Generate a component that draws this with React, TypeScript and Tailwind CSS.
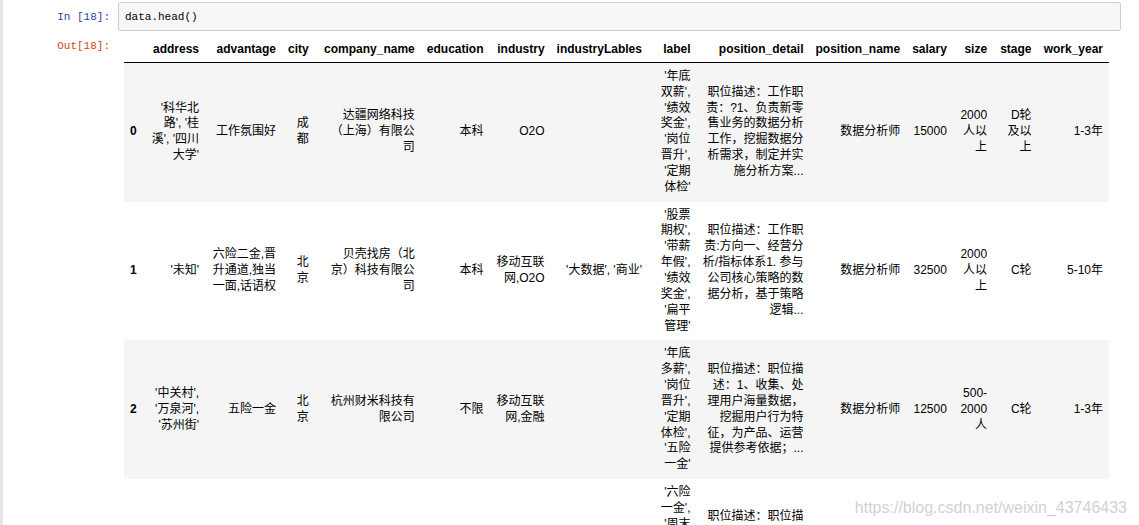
type Row = {
  idx: number;
  address: string;
  advantage: string;
  city: string;
  company: string;
  education: string;
  industry: string;
  industryLables: string;
  label: string;
  positionDetail: string;
  positionName: string;
  salary: number;
  size: string;
  stage: string;
  workYear: string;
};

const columns = [
  'address',
  'advantage',
  'city',
  'company_name',
  'education',
  'industry',
  'industryLables',
  'label',
  'position_detail',
  'position_name',
  'salary',
  'size',
  'stage',
  'work_year',
];

const rows: Row[] = [
  {
    idx: 0,
    address: "'科华北路', '桂溪', '四川大学'",
    advantage: '工作氛围好',
    city: '成都',
    company: '达疆网络科技（上海）有限公司',
    education: '本科',
    industry: 'O2O',
    industryLables: '',
    label: "'年底双薪', '绩效奖金', '岗位晋升', '定期体检'",
    positionDetail: '职位描述：工作职责：?1、负责新零售业务的数据分析工作，挖掘数据分析需求，制定并实施分析方案...',
    positionName: '数据分析师',
    salary: 15000,
    size: '2000人以上',
    stage: 'D轮及以上',
    workYear: '1-3年',
  },
  {
    idx: 1,
    address: "'未知'",
    advantage: '六险二金,晋升通道,独当一面,话语权',
    city: '北京',
    company: '贝壳找房（北京）科技有限公司',
    education: '本科',
    industry: '移动互联网,O2O',
    industryLables: "'大数据', '商业'",
    label: "'股票期权', '带薪年假', '绩效奖金', '扁平管理'",
    positionDetail: '职位描述：工作职责:方向一、经营分析/指标体系1. 参与公司核心策略的数据分析，基于策略逻辑...',
    positionName: '数据分析师',
    salary: 32500,
    size: '2000人以上',
    stage: 'C轮',
    workYear: '5-10年',
  },
  {
    idx: 2,
    address: "'中关村', '万泉河', '苏州街'",
    advantage: '五险一金',
    city: '北京',
    company: '杭州财米科技有限公司',
    education: '不限',
    industry: '移动互联网,金融',
    industryLables: '',
    label: "'年底多薪', '岗位晋升', '定期体检', '五险一金'",
    positionDetail: '职位描述：职位描述：1、收集、处理用户海量数据，挖掘用户行为特征，为产品、运营提供参考依据；...',
    positionName: '数据分析师',
    salary: 12500,
    size: '500-2000人',
    stage: 'C轮',
    workYear: '1-3年',
  },
  {
    idx: 3,
    address: "'望京'",
    advantage: '六险一金',
    city: '北京',
    company: '北京字节跳动科技有限公司',
    education: '本科',
    industry: '文娱丨内容',
    industryLables: '',
    label: "'六险一金', '周末双休', '带薪年假', '免费工作餐'",
    positionDetail: '职位描述：职位描述：1、负责用户增长相关数据的分析与挖掘，搭建指标体系，输出分析报告；...',
    positionName: '数据分析师',
    salary: 20000,
    size: '2000人以上',
    stage: 'D轮',
    workYear: '3-5年',
  },
];

const cell = 'px-[6px] py-[6px] text-right align-middle';
const head = 'px-[6px] pt-[8px] pb-[4px] text-right align-middle font-bold';

export default function App() {
  return (
    <div className="relative h-[525px] w-[1139px] overflow-hidden bg-white text-black [text-spacing-trim:space-all]">
      <div className="flex h-full">
        <div className="w-[3px] shrink-0 bg-[#e7e7e7]" />
        <div className="flex-1 pt-[2px]">
          {/* input cell */}
          <div className="flex items-start">
            <div className="w-[115px] shrink-0 pr-[8px] pt-[7px] text-right font-['Liberation_Mono',monospace] text-[11px] leading-[16px] text-[#303F9F]">
              In [18]:
            </div>
            <div className="h-[29px] w-[1003px] rounded-[2px] border border-[#cfcfcf] bg-[#f7f7f7] px-[6px] pt-[6px] font-['Liberation_Mono',monospace] text-[11px] leading-[16px]">
              data.head()
            </div>
          </div>

          {/* output */}
          <div className="mt-[3px] flex items-start">
            <div className="w-[115px] shrink-0 pr-[8px] pt-[4px] text-right font-['Liberation_Mono',monospace] text-[11px] leading-[16px] text-[#D84315]">
              Out[18]:
            </div>
            <div className="ml-[6px] w-[985px]">
              <table className="max-w-full border-collapse font-['Liberation_Sans','Noto_Sans_CJK_SC',sans-serif] text-[12px] leading-[15.84px]">
                <thead className="border-b border-black">
                  <tr>
                    <th className={head} />
                    {columns.map((c) => (
                      <th key={c} className={c === 'position_detail' ? `${head} w-[113px]` : head}>
                        {c}
                      </th>
                    ))}
                  </tr>
                </thead>
                <tbody>
                  {rows.map((r) => (
                    <tr key={r.idx} className={r.idx % 2 === 0 ? 'bg-[#f5f5f5]' : 'bg-white'}>
                      <th className={`${cell} font-bold`}>{r.idx}</th>
                      <td className={cell}>{r.address}</td>
                      <td className={cell}>{r.advantage}</td>
                      <td className={cell}>{r.city}</td>
                      <td className={cell}>{r.company}</td>
                      <td className={cell}>{r.education}</td>
                      <td className={cell}>{r.industry}</td>
                      <td className={cell}>{r.industryLables}</td>
                      <td className={cell}>{r.label}</td>
                      <td className={`${cell} w-[113px]`}>{r.positionDetail}</td>
                      <td className={cell}>{r.positionName}</td>
                      <td className={cell}>{r.salary}</td>
                      <td className={cell}>{r.size}</td>
                      <td className={cell}>{r.stage}</td>
                      <td className={cell}>{r.workYear}</td>
                    </tr>
                  ))}
                </tbody>
              </table>
            </div>
          </div>
        </div>
      </div>

      <div className="pointer-events-none absolute right-[12px] top-[499px] font-['Liberation_Sans',sans-serif] text-[16px] leading-[18px] text-[#d2d2d2]">
        https://blog.csdn.net/weixin_43746433
      </div>
    </div>
  );
}
